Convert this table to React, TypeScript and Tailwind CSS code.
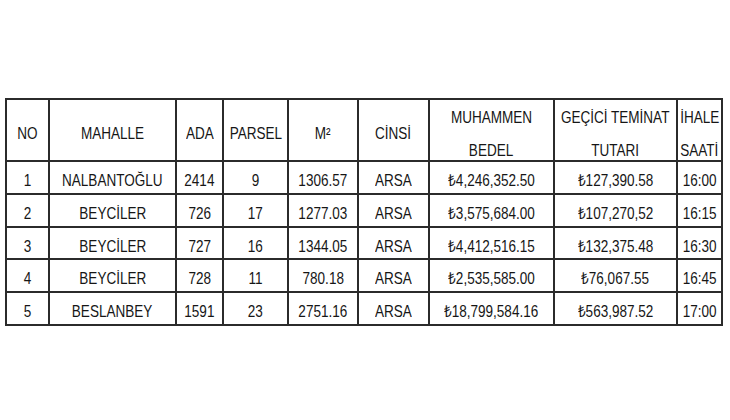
import React from 'react'

const rows = [
  ['1', 'NALBANTOĞLU', '2414', '9', '1306.57', 'ARSA', '₺4,246,352.50', '₺127,390.58', '16:00'],
  ['2', 'BEYCİLER', '726', '17', '1277.03', 'ARSA', '₺3,575,684.00', '₺107,270,52', '16:15'],
  ['3', 'BEYCİLER', '727', '16', '1344.05', 'ARSA', '₺4,412,516.15', '₺132,375.48', '16:30'],
  ['4', 'BEYCİLER', '728', '11', '780.18', 'ARSA', '₺2,535,585.00', '₺76,067.55', '16:45'],
  ['5', 'BESLANBEY', '1591', '23', '2751.16', 'ARSA', '₺18,799,584.16', '₺563,987.52', '17:00'],
]

const headers = [['NO'], ['MAHALLE'], ['ADA'], ['PARSEL'], ['M²'], ['CİNSİ'], ['MUHAMMEN', 'BEDEL'], ['GEÇİCİ TEMİNAT', 'TUTARI'], ['İHALE', 'SAATİ']]

const widths = [43, 127, 47, 65, 70, 71, 125, 123, 45]
const rowHeights = [30, 32, 31, 31, 31]

// Arial Narrow look-alike: squeeze Liberation Sans horizontally
function Narrow({ children }: { children: React.ReactNode }) {
  return (
    <div className="flex justify-center whitespace-nowrap">
      <span className="inline-block scale-x-[0.82]">{children}</span>
    </div>
  )
}

export default function App() {
  return (
    <div className="w-[730px] h-[420px] bg-white pt-[98px] pl-[5px] overflow-hidden">
      <table
        className="table-fixed border-collapse w-[717px] text-[16.5px] text-[#161616] text-center"
        style={{ fontFamily: '"Liberation Sans", Arial, sans-serif' }}
      >
        <colgroup>
          {widths.map((w, i) => (
            <col key={i} style={{ width: w }} />
          ))}
        </colgroup>
        <thead>
          <tr>
            {headers.map((h, i) => (
              <th key={i} className="border-2 border-[#2b2b2b] font-normal p-0">
                <div className="h-[60px] pt-[7px] flex flex-col justify-center leading-[33px]">
                  {h.map((line, k) => (
                    <Narrow key={k}>{line}</Narrow>
                  ))}
                </div>
              </th>
            ))}
          </tr>
        </thead>
        <tbody>
          {rows.map((r, i) => (
            <tr key={i} style={{ height: rowHeights[i] }}>
              {r.map((c, j) => (
                <td key={j} className="border-2 border-[#2b2b2b] p-0 pt-[6px]">
                  <Narrow>{c}</Narrow>
                </td>
              ))}
            </tr>
          ))}
        </tbody>
      </table>
    </div>
  )
}
